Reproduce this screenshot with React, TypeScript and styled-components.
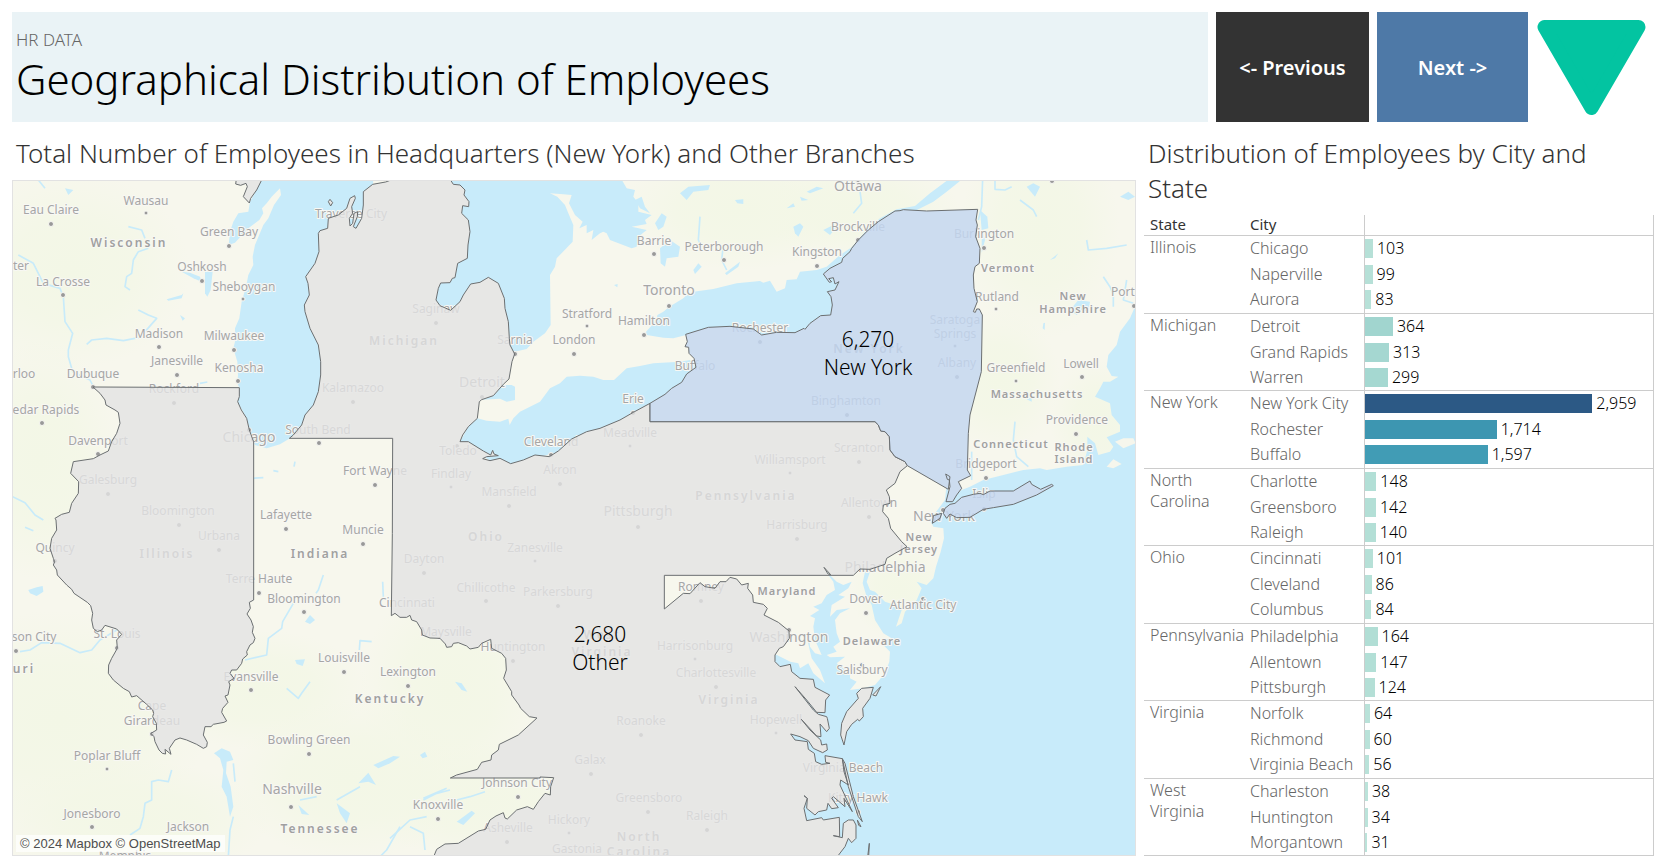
import React from "react";
import styled, { createGlobalStyle } from "styled-components";

const GlobalStyle = createGlobalStyle`
  *, *::before, *::after { box-sizing: border-box; }
  body {
    margin: 0;
    background: #ffffff;
    font-family: "Noto Sans", "Open Sans", sans-serif;
    font-weight: 300;
    color: #333333;
  }
`;

const Page = styled.div`
  min-height: 100vh;
  padding: 12px;
  display: flex;
  flex-direction: column;
  gap: 8px;
`;

const Header = styled.header`
  display: grid;
  grid-template-columns: 1fr 153px 151px 118px;
  gap: 8px;
  height: 110px;
`;

const TitlePanel = styled.div`
  background: #eaf3f6;
  padding: 16px 4px 0;
`;

const Kicker = styled.div`
  font-size: 17px;
  line-height: 24px;
  color: #666666;
`;

const Title = styled.h1`
  margin: 0;
  font-size: 42px;
  line-height: 54px;
  font-weight: 300;
  color: #000000;
`;

const NavButton = styled.button<{ $color: string }>`
  border: 0;
  padding: 0;
  background: ${(p) => p.$color};
  color: #ffffff;
  font-family: inherit;
  font-size: 20px;
  font-weight: 600;
  cursor: pointer;
`;

const Logo = styled.svg`
  display: block;
  width: 118px;
  height: 110px;
`;

const Main = styled.main`
  flex: 1;
  display: grid;
  grid-template-columns: minmax(0, 1fr) 510px;
  gap: 8px;
`;

const Panel = styled.section`
  display: flex;
  flex-direction: column;
  min-width: 0;
`;

const PanelTitle = styled.h2`
  margin: 0;
  padding: 6px 16px 9px 4px;
  font-size: 26px;
  line-height: 35px;
  font-weight: 300;
  color: #333333;
`;

const MapFrame = styled.div`
  position: relative;
  flex: 1;
  min-height: 400px;
  border: 1px solid #e2e2e2;
  overflow: hidden;
`;

const MapSvg = styled.svg`
  display: block;
  position: absolute;
  inset: 0;
  width: 100%;
  height: 100%;
`;

const Attribution = styled.div`
  position: absolute;
  left: 3px;
  bottom: 3px;
  padding: 0 4px;
  background: rgba(255, 255, 255, 0.7);
  font: 400 13px/17px "Liberation Sans", Arial, sans-serif;
  a { color: #4d4d4d; text-decoration: none; }
`;

const CityLabel = styled.text<{ $large?: boolean }>`
  font-size: ${(p) => (p.$large ? 14 : 12)}px;
  font-weight: 400;
  text-anchor: middle;
  fill: #a6a6a6;
  stroke: #f8f8f4;
  stroke-width: 2px;
  stroke-linejoin: round;
  paint-order: stroke;
`;

const StateLabel = styled.text<{ $small?: boolean }>`
  font-size: ${(p) => (p.$small ? 11 : 12)}px;
  letter-spacing: ${(p) => (p.$small ? 1 : 2)}px;
  font-weight: 600;
  text-anchor: middle;
  fill: #a0a0a0;
  stroke: #f8f8f4;
  stroke-width: 2px;
  stroke-linejoin: round;
  paint-order: stroke;
`;

const MarkLabel = styled.text`
  font-size: 21px;
  font-weight: 300;
  text-anchor: middle;
  fill: #000000;
`;

const Table = styled.table`
  width: 100%;
  table-layout: fixed;
  border-collapse: separate;
  border-spacing: 0;
  font-size: 16px;
  line-height: 21px;
  tbody:nth-of-type(even) tr:last-child { height: 25px; }
`;

const Row = styled.tr`
  height: 26px;
`;

const HeadRow = styled.tr`
  height: 21px;
`;

const HeadCell = styled.th`
  padding: 0 0 2px 6px;
  border-bottom: 1px solid #cccccc;
  text-align: left;
  font-size: 15px;
  line-height: 18px;
  font-weight: 400;
  color: #333333;
`;

const HeadChartCell = styled.td`
  border: 1px solid #cccccc;
  border-top: 0;
`;

const StateCell = styled.th`
  padding: 1px 2px 0 6px;
  border-bottom: 1px solid #cccccc;
  text-align: left;
  vertical-align: top;
  font-weight: 300;
  color: #666666;
`;

const CityCell = styled.td<{ $last: boolean }>`
  padding: 0 0 2px 6px;
  border-bottom: ${(p) => (p.$last ? "1px solid #cccccc" : "0")};
  white-space: nowrap;
  color: #666666;
`;

const ChartCell = styled.td<{ $last: boolean }>`
  padding: 0 0 2px;
  border-left: 1px solid #cccccc;
  border-right: 1px solid #cccccc;
  border-bottom: ${(p) => (p.$last ? "1px solid #cccccc" : "0")};
`;

const BarLine = styled.div`
  display: flex;
  align-items: center;
  gap: 4px;
  height: 21px;
  color: #000000;
`;

const Bar = styled.div<{ $color: string }>`
  flex: none;
  height: 19px;
  background: ${(p) => p.$color};
`;

type CityRow = [name: string, count: number, color: string];

const AXIS_MAX = 3750;

const groups: { state: string; cities: CityRow[] }[] = [
  { state: "Illinois", cities: [["Chicago", 103, "#b6e0d7"], ["Naperville", 99, "#b6e0d7"], ["Aurora", 83, "#b7e1d8"]] },
  { state: "Michigan", cities: [["Detroit", 364, "#a1d5cf"], ["Grand Rapids", 313, "#a5d7d1"], ["Warren", 299, "#a5d8d1"]] },
  { state: "New York", cities: [["New York City", 2959, "#2c5985"], ["Rochester", 1714, "#3d96b1"], ["Buffalo", 1597, "#419cb5"]] },
  { state: "North Carolina", cities: [["Charlotte", 148, "#b2dfd6"], ["Greensboro", 142, "#b3dfd6"], ["Raleigh", 140, "#b3dfd6"]] },
  { state: "Ohio", cities: [["Cincinnati", 101, "#b6e0d7"], ["Cleveland", 86, "#b7e1d8"], ["Columbus", 84, "#b7e1d8"]] },
  { state: "Pennsylvania", cities: [["Philadelphia", 164, "#b1ded5"], ["Allentown", 147, "#b2dfd6"], ["Pittsburgh", 124, "#b4dfd6"]] },
  { state: "Virginia", cities: [["Norfolk", 64, "#b9e2d9"], ["Richmond", 60, "#b9e2d9"], ["Virginia Beach", 56, "#b9e2d9"]] },
  { state: "West Virginia", cities: [["Charleston", 38, "#bbe3da"], ["Huntington", 34, "#bbe3da"], ["Morgantown", 31, "#bbe3da"]] },
];

/* Outlines are drawn on a grid three times finer than the map's own units. */
const illinois =
  "M279 1161 718 1163 718 1190 713 1205 724 1230 740 1255 748 1290 757 1315 761 1325 761 1800 748 1807 751 1825 741 1842 753 1860 760 1880 757 1897 765 1915 760 1928 750 1935 740 1955 742 1965 728 1977 725 1990 710 2010 695 2010 690 2020 702 2035 686 2045 690 2055 684 2085 675 2088 684 2107 668 2125 665 2137 680 2163 672 2167 640 2173 633 2180 615 2180 610 2205 622 2227 620 2240 610 2245 590 2233 560 2220 540 2214 525 2220 508 2245 513 2263 495 2248 497 2262 487 2260 477 2250 465 2225 462 2210 453 2200 470 2190 469 2170 458 2150 461 2140 458 2130 440 2113 410 2087 395 2091 388 2075 370 2065 340 2040 325 2020 326 1995 335 1975 352 1945 350 1920 365 1903 350 1887 315 1876 305 1890 292 1895 280 1885 275 1860 278 1840 272 1817 262 1807 222 1780 215 1768 200 1755 172 1725 170 1710 160 1695 164 1685 160 1675 150 1645 155 1615 170 1590 168 1560 165 1555 185 1543 208 1537 215 1510 235 1480 236 1445 212 1420 220 1385 280 1376 300 1365 325 1353 335 1325 350 1300 360 1270 355 1237 345 1230 318 1215 315 1200 300 1180Z";

const otherStates =
  "M1157 546 1118 553 1090 575 1090 615 1085 655 1068 685 1060 680 1072 650 1073 635 1062 640 1058 670 1050 678 1048 655 1058 640 1055 620 1066 595 1064 587 1050 595 1040 625 1015 645 985 655 983 685 960 692 955 700 957 755 945 790 917 830 924 850 928 885 913 915 915 935 930 985 955 1035 962 1085 962 1125 955 1175 940 1215 915 1245 905 1275 880 1305 868 1315 1178 1315 1177 1600 1174 1847 1185 1840 1200 1852 1220 1852 1230 1846 1235 1860 1250 1865 1265 1890 1267 1905 1290 1914 1320 1915 1336 1932 1340 1942 1355 1940 1360 1930 1375 1928 1400 1938 1410 1947 1435 1942 1445 1930 1472 1918 1475 1945 1505 1960 1517 1975 1519 2010 1511 2035 1535 2075 1535 2085 1557 2115 1562 2125 1588 2150 1611 2154 1555 2205 1498 2233 1495 2250 1475 2265 1473 2280 1445 2287 1432 2308 1370 2325 1351 2334 1620 2334 1620 2331 1661 2333 1652 2360 1651 2385 1635 2380 1615 2405 1600 2428 1582 2420 1550 2430 1522 2457 1515 2454 1510 2438 1488 2448 1470 2460 1457 2488 1435 2493 1375 2530 1335 2532 1310 2548 1297 2580 2510 2580 2515 2566 2535 2540 2545 2515 2555 2528 2568 2515 2568 2475 2560 2460 2545 2460 2530 2470 2527 2513 2500 2507 2519 2510 2518 2452 2470 2460 2465 2453 2420 2462 2412 2425 2422 2395 2412 2387 2422 2395 2420 2425 2445 2445 2455 2435 2480 2430 2484 2410 2495 2426 2515 2423 2495 2395 2500 2390 2535 2420 2532 2395 2557 2435 2520 2355 2522 2340 2545 2355 2532 2315 2527 2276 2475 2267 2477 2287 2490 2290 2465 2293 2447 2285 2443 2260 2425 2248 2422 2225 2385 2220 2372 2202 2400 2210 2425 2222 2440 2245 2468 2258 2482 2250 2480 2232 2465 2235 2462 2220 2430 2190 2404 2158 2450 2208 2463 2210 2460 2172 2480 2195 2488 2185 2482 2155 2480 2150 2455 2143 2440 2130 2385 2060 2420 2100 2450 2137 2475 2138 2477 2100 2489 2085 2445 2062 2440 2038 2400 2035 2375 2015 2371 1993 2340 2000 2325 1985 2325 1965 2338 1945 2350 1940 2368 1915 2367 1893 2335 1867 2292 1845 2302 1825 2290 1813 2260 1807 2258 1785 2243 1765 2245 1750 2225 1755 2210 1737 2190 1732 2178 1745 2160 1745 2145 1765 2115 1760 2100 1748 2070 1781 2050 1780 1993 1827 1993 1726 2560 1726 2580 1707 2610 1708 2655 1693 2660 1675 2685 1660 2721 1640 2705 1625 2672 1585 2665 1555 2648 1535 2650 1515 2670 1510 2668 1490 2659 1470 2685 1450 2700 1415 2722 1397 2715 1385 2685 1370 2670 1350 2668 1310 2655 1295 2642 1293 2635 1275 2625 1265 1950 1265 1950 1210 1900 1237 1860 1260 1800 1285 1760 1295 1715 1317 1675 1353 1648 1370 1605 1365 1570 1380 1532 1391 1500 1375 1470 1382 1448 1376 1460 1370 1495 1367 1482 1362 1478 1351 1472 1365 1450 1353 1405 1325 1380 1325 1388 1305 1405 1280 1432 1255 1438 1205 1445 1199 1480 1187 1510 1153 1527 1137 1536 1085 1544 1062 1530 1035 1528 1015 1525 965 1515 925 1513 895 1495 850 1465 832 1440 847 1412 852 1390 885 1380 905 1352 931 1320 917 1308 900 1315 865 1322 849 1350 848 1357 835 1365 833 1373 790 1402 775 1404 735 1410 695 1405 660 1385 640 1388 617 1406 620 1407 605 1392 585 1395 570 1380 555 1360 553 1345 530 1200 530Z " +
  "M710 530 707 552 722 556 738 550 742 560 730 590 748 609 752 595 770 570 790 530Z " +
  "M2585 2065 2620 2062 2610 2095 2588 2125 2590 2150 2578 2163 2573 2158 2555 2173 2540 2195 2532 2235 2522 2205 2525 2170 2540 2135 2575 2095 2570 2080Z M2642 2060 2618 2085 2628 2088Z " +
  "M2527 2276 2535 2290 2560 2390 2587 2465 2575 2450 2545 2360Z M2572 2460 2583 2480 2576 2476Z M2608 2530 2603 2570 2606 2570Z M985 605 990 598 998 608 992 618Z M2472 1702 2492 1724 2484 1722Z";

const newYork =
  "M1950 1265 2625 1265 2635 1275 2642 1293 2655 1295 2668 1310 2670 1350 2685 1370 2715 1385 2722 1397 2845 1468 2850 1430 2837 1422 2842 1438 2848 1440 2850 1460 2838 1505 2858 1505 2870 1485 2885 1465 2875 1445 2912 1427 2902 1410 2905 1300 2910 1245 2944 1115 2947 945 2938 927 2930 927 2926 937 2920 935 2932 905 2922 865 2920 825 2925 800 2938 790 2940 745 2927 710 2932 675 2928 660 2933 628 2780 633 2710 629 2700 632 2685 633 2635 665 2605 690 2575 720 2555 745 2550 755 2528 775 2525 787 2490 805 2470 822 2488 847 2495 845 2486 836 2500 833 2505 852 2517 845 2505 870 2482 875 2493 890 2497 915 2492 945 2462 947 2430 970 2415 988 2412 985 2385 998 2330 997 2285 1005 2260 987 2190 979 2125 982 2057 1003 2062 1025 2055 1040 2066 1042 2067 1060 2082 1075 2088 1102 2060 1122 2045 1147 2015 1165 1995 1183 1950 1210Z " +
  "M2830 1540 2835 1525 2850 1513 2865 1510 2885 1492 2920 1483 2940 1480 2950 1484 2970 1473 3040 1473 3090 1443 3095 1453 3122 1468 3155 1453 3160 1457 3110 1485 3040 1513 2980 1523 2950 1528 2910 1552 2870 1553 2850 1542 2840 1555Z M2797 1570 2800 1547 2825 1540 2820 1555Z";

const water = [
  "M790 530 750 605 745 635 715 640 700 665 690 695 686 735 705 728 720 712 745 685 778 660 790 640 786 625 800 610 815 590 840 565 843 585 822 615 805 655 790 675 765 735 758 770 760 795 745 825 738 860 725 905 718 955 705 985 705 1025 700 1045 712 1085 714 1125 712 1150 718 1163 713 1205 740 1255 757 1315 765 1335 800 1345 840 1333 870 1315 1000 1315 1100 1000 1120 530Z",
  "M1200 530 1860 530 1880 565 1905 570 1900 590 1915 610 1915 635 1955 645 1935 660 1940 672 1895 680 1940 690 1915 710 1910 740 1895 745 1830 720 1820 700 1810 695 1800 700 1775 720 1780 690 1760 700 1760 675 1738 685 1748 665 1725 645 1707 610 1715 585 1690 583 1650 580 1672 590 1695 615 1705 640 1720 675 1718 725 1670 775 1665 800 1650 825 1652 975 1635 1000 1600 1025 1580 1047 1544 1055 1300 1055Z",
  "M1480 1187 1510 1155 1535 1155 1545 1160 1545 1200 1520 1205 1500 1196 1445 1199Z",
  "M1380 1325 1405 1280 1432 1255 1460 1262 1500 1265 1525 1256 1529 1275 1540 1255 1560 1235 1620 1205 1650 1165 1680 1150 1700 1130 1740 1127 1780 1130 1810 1140 1842 1140 1880 1105 1920 1098 1960 1090 2040 1085 2070 1080 2088 1102 2100 1250 1500 1400Z",
  "M1940 1005 1938 995 1970 960 1972 945 1990 935 2008 920 2050 895 2060 885 2080 875 2140 867 2210 850 2280 843 2290 848 2310 842 2330 875 2355 865 2360 840 2390 838 2400 815 2450 810 2480 800 2520 765 2555 742 2600 690 2640 655 2690 628 2745 618 2790 580 2850 535 2890 535 2840 575 2800 605 2740 635 2500 1010 2060 1010 2058 1005 2020 1015 1990 1013Z",
  "M3420 900 3407 915 3390 955 3360 995 3350 1035 3325 1065 3320 1100 3335 1128 3355 1130 3330 1145 3310 1145 3300 1165 3285 1190 3330 1210 3335 1245 3360 1275 3360 1295 3320 1312 3340 1340 3330 1355 3295 1365 3285 1330 3262 1310 3262 1350 3250 1395 3200 1400 3140 1410 3120 1405 3070 1410 3010 1425 2950 1440 2910 1460 2885 1470 2850 1500 2840 1450 2835 1500 2790 1560 2800 1580 2830 1585 2832 1615 2822 1655 2808 1700 2800 1735 2780 1755 2750 1745 2765 1765 2750 1800 2715 1835 2705 1870 2688 1880 2705 1830 2685 1815 2655 1805 2625 1775 2610 1770 2600 1745 2610 1715 2595 1715 2588 1750 2600 1790 2615 1815 2625 1860 2650 1900 2675 1915 2650 1920 2645 1930 2670 1955 2668 1985 2655 2020 2625 2055 2590 2065 2550 2070 2570 2045 2550 2035 2550 2020 2510 1990 2535 1970 2490 1972 2480 1965 2510 1955 2500 1940 2520 1925 2510 1900 2505 1860 2520 1840 2550 1825 2510 1830 2490 1850 2495 1815 2535 1790 2515 1785 2545 1765 2555 1745 2530 1755 2510 1745 2480 1715 2470 1705 2500 1745 2505 1770 2480 1785 2465 1810 2440 1820 2458 1830 2430 1848 2445 1855 2440 1880 2445 1920 2465 1965 2445 1960 2430 1940 2425 1890 2422 1920 2435 1975 2460 2010 2475 2050 2440 2020 2425 1990 2400 2005 2385 1960 2395 1990 2371 1985 2320 1960 2300 2100 2300 2570 3420 2580Z",
];

const lakes = [
  "M615 815 638 815 632 870 622 890 615 880Z", "M545 815 570 818 600 830 605 845 580 835Z",
  "M500 898 545 885 550 880 545 895 505 902Z", "M195 565 220 570 205 585Z", "M540 945 555 955 548 962Z",
  "M85 1770 110 1762 128 1758 130 1775 110 1788 90 1780Z", "M915 1865 930 1845 945 1860 930 1872Z",
  "M885 1980 915 1978 908 1998 890 1992Z", "M642 2260 665 2245 690 2255 700 2280 680 2285 678 2320 692 2360 700 2420 690 2450 680 2390 665 2360 670 2310 660 2275Z",
  "M1075 2350 1105 2318 1128 2355 1105 2345Z", "M1010 2410 1050 2440 1040 2470 1020 2440Z",
  "M1120 2295 1180 2268 1200 2270 1170 2290 1135 2305Z", "M895 2415 928 2445 905 2442Z",
  "M1370 2465 1415 2432 1425 2440 1390 2475Z", "M1365 2045 1385 2050 1402 2075 1385 2070Z",
  "M1260 2265 1275 2255 1282 2270 1268 2275Z", "M1980 745 2010 720 2040 740 2035 770 2000 775 1995 800 1982 790Z",
  "M2080 810 2095 790 2105 800 2085 822Z", "M2175 820 2220 785 2215 800 2180 825Z", "M1842 855 1853 852 1852 862Z",
  "M2040 580 2065 560 2130 555 2125 570 2080 575 2060 600Z", "M2205 600 2230 598 2230 612 2212 610Z",
  "M1965 670 1985 640 2000 650 1990 680 1975 690Z", "M1905 600 1925 590 1935 620 1950 640 1920 625Z",
  "M2940 630 2962 650 2965 685 2945 690Z", "M2945 720 2950 700 2955 720 2945 760Z",
  "M3210 930 3235 900 3270 905 3265 935 3245 930 3230 945Z", "M3130 970 3135 968 3134 990 3128 985Z",
  "M3080 1198 3095 1190 3095 1205Z", "M3360 590 3385 575 3405 590 3385 600Z", "M3080 560 3100 550 3120 560 3105 590Z",
  "M2360 625 2380 610 2385 620Z", "M2420 575 2450 560 2470 565 2430 580Z", "M2380 680 2400 670 2410 680 2395 710 2385 700Z",
  "M2470 690 2500 675 2510 680 2490 705Z", "M2400 590 2425 600 2405 602Z", "M3150 780 3175 760 3165 775Z",
];

const rivers = [
  "M55 765 100 790 130 850 180 865 190 890 195 965 218 1000 205 1050 205 1070 218 1115 270 1140 280 1160",
  "M260 1033 275 1020 320 1015 370 1022 420 1012 470 955 445 945 415 930",
  "M445 745 415 755 400 780 395 820 380 830 375 860 390 870", "M385 680 425 690 435 715", "M115 540 135 565",
  "M60 1955 90 1950 125 1928 180 1930 240 1958 275 1950 300 1920 350 1890",
  "M38 1490 75 1508 105 1545 130 1560", "M75 1582 100 1592", "M515 2310 505 2345 475 2340 455 2345 455 2400 435 2410 430 2450 420 2485 390 2505",
  "M700 2290 705 2345", "M700 2450 690 2490 685 2570", "M970 1725 955 1770 948 1780", "M880 1810 848 1865 845 1885 805 1915 800 1965 735 1980",
  "M1078 1950 1080 1922 1115 1925", "M1148 1745 1150 1790", "M860 2065 895 2095 905 2080 930 2045", "M1200 2480 1160 2550 1140 2570",
  "M1270 2400 1310 2380 1350 2370 M1270 2395 1340 2365", "M1370 2400 1410 2390 1455 2375", "M1170 2515 1230 2460 1280 2450 M1230 2480 1270 2500 1275 2550",
  "M950 2390 900 2400 M1080 2360 1010 2400", "M2948 535 2945 620 2935 660", "M2985 540 2985 568 3015 570 3035 560",
  "M3260 720 3265 750 3320 745 3380 735", "M3310 830 3330 860 3340 885 3340 920", "M3380 840 3370 900 3400 910",
  "M3045 1265 3040 1320 3050 1370 3085 1400", "M2580 575 2585 610 2560 640", "M2100 650 2095 720 2105 740", "M2170 735 2165 780 2180 810",
  "M755 1435 790 1433 M820 1412 835 1415", "M885 1385 882 1400", "M3060 600 3100 630 3110 650",
  "M2915 1355 2915 1440", "M2540 1360 2510 1420 2430 1480 2395 1500", "M2330 1585 2420 1640 2470 1705", "M600 1150 622 1146",
];

type City = [x: number, y: number, name: string, size?: "L"];

const cities: City[] = [
  [51, 214, "Eau Claire"], [146, 205, "Wausau"], [229, 236, "Green Bay"], [21, 270, "ter"], [63, 286, "La Crosse"],
  [202, 271, "Oshkosh"], [244, 291, "Sheboygan"], [159, 338, "Madison"], [234, 340, "Milwaukee"], [177, 365, "Janesville"],
  [239, 372, "Kenosha"], [24, 378, "rloo"], [93, 378, "Dubuque"], [174, 393, "Rockford"], [353, 392, "Kalamazoo"],
  [46, 414, "edar Rapids"], [98, 445, "Davenport"], [249, 442, "Chicago", "L"], [318, 434, "South Bend"], [351, 218, "Traverse City"],
  [375, 475, "Fort Wayne"], [108, 484, "Galesburg"], [178, 515, "Bloomington"], [286, 519, "Lafayette"], [363, 534, "Muncie"],
  [219, 540, "Urbana"], [55, 552, "Quincy"], [259, 583, "Terre Haute"], [304, 603, "Bloomington"], [407, 607, "Cincinnati"],
  [34, 641, "son City"], [117, 638, "St. Louis"], [344, 662, "Louisville"], [251, 681, "Evansville"], [408, 676, "Lexington"],
  [152, 710, "Cape"], [152, 725, "Girardeau"], [309, 744, "Bowling Green"], [107, 760, "Poplar Bluff"], [292, 794, "Nashville", "L"],
  [92, 818, "Jonesboro"], [188, 831, "Jackson"], [125, 860, "Memphis"], [654, 245, "Barrie"], [724, 251, "Peterborough"],
  [669, 295, "Toronto", "L"], [587, 318, "Stratford"], [644, 325, "Hamilton"], [574, 344, "London"], [515, 344, "Sarnia"],
  [436, 313, "Saginaw"], [482, 387, "Detroit", "L"], [760, 332, "Rochester"], [695, 370, "Buffalo"], [633, 403, "Erie"],
  [630, 437, "Meadville"], [551, 446, "Cleveland"], [458, 455, "Toledo"], [560, 474, "Akron"], [451, 478, "Findlay"],
  [509, 496, "Mansfield"], [638, 516, "Pittsburgh", "L"], [790, 464, "Williamsport"], [797, 529, "Harrisburg"], [535, 552, "Zanesville"],
  [424, 563, "Dayton"], [486, 592, "Chillicothe"], [558, 596, "Parkersburg"], [446, 636, "Maysville"], [513, 651, "Huntington"],
  [517, 787, "Johnson City"], [438, 809, "Knoxville"], [508, 832, "Asheville"], [569, 824, "Hickory"], [577, 853, "Gastonia"],
  [649, 802, "Greensboro"], [590, 764, "Galax"], [641, 725, "Roanoke"], [707, 820, "Raleigh"], [695, 650, "Harrisonburg"],
  [716, 677, "Charlottesville"], [701, 591, "Romney"], [789, 642, "Washington", "L"], [776, 724, "Hopewell"], [858, 191, "Ottawa", "L"],
  [858, 231, "Brockville"], [817, 256, "Kingston"], [984, 238, "Burlington"], [997, 301, "Rutland"], [1123, 296, "Port"],
  [955, 324, "Saratoga"], [955, 338, "Springs"], [957, 367, "Albany"], [1016, 372, "Greenfield"], [1081, 368, "Lowell"],
  [846, 405, "Binghamton"], [859, 452, "Scranton"], [1077, 424, "Providence"], [986, 468, "Bridgeport"], [984, 498, "Islip"],
  [869, 507, "Allentown"], [944, 521, "New York", "L"], [885, 572, "Philadelphia", "L"], [866, 603, "Dover"], [923, 609, "Atlantic City"],
  [862, 674, "Salisbury"], [843, 772, "Virginia Beach"], [858, 802, "Kitty Hawk"],
];

const stateNames: [x: number, y: number, name: string, size?: "S"][] = [
  [129, 247, "Wisconsin"], [404, 345, "Michigan"], [167, 558, "Illinois"], [320, 558, "Indiana"], [24, 673, "uri"],
  [390, 703, "Kentucky"], [320, 833, "Tennessee"], [486, 541, "Ohio"], [746, 500, "Pennsylvania"], [602, 639, "West"],
  [602, 656, "Virginia"], [729, 704, "Virginia"], [639, 841, "North"], [639, 856, "Carolina"], [869, 353, "New York"],
  [787, 595, "Maryland", "S"], [1008, 272, "Vermont", "S"], [1073, 300, "New", "S"], [1073, 313, "Hampshire", "S"],
  [1037, 398, "Massachusetts", "S"], [1011, 448, "Connecticut", "S"], [1074, 451, "Rhode", "S"], [1074, 463, "Island", "S"],
  [919, 541, "New", "S"], [919, 553, "Jersey", "S"], [872, 645, "Delaware", "S"],
];

const dots: [x: number, y: number][] = [
  [51, 224], [229, 246], [63, 295], [202, 281], [159, 347], [234, 350], [177, 375], [238, 381], [93, 387], [174, 403],
  [353, 402], [42, 423], [98, 454], [249, 430], [319, 443], [375, 485], [108, 494], [179, 525], [286, 529], [363, 544],
  [219, 550], [55, 561], [259, 593], [304, 612], [16, 651], [117, 648], [344, 672], [251, 690], [408, 686], [152, 734],
  [309, 754], [291, 807], [92, 827], [654, 254], [724, 260], [669, 306], [644, 335], [574, 354], [515, 354], [436, 323],
  [482, 397], [760, 342], [633, 413], [551, 455], [457, 446], [560, 484], [509, 506], [638, 527], [797, 539], [424, 573],
  [486, 601], [558, 606], [513, 661], [518, 797], [438, 819], [507, 842], [648, 812], [591, 774], [641, 735], [707, 830],
  [716, 687], [701, 601], [789, 630], [858, 240], [817, 266], [984, 248], [1134, 306], [957, 377], [1082, 377], [847, 415],
  [859, 462], [1076, 434], [986, 478], [984, 509], [869, 517], [943, 510], [866, 613], [923, 599], [862, 665], [858, 812],
  [1052, 181], [858, 180],
];

const smallDots: [x: number, y: number][] = [
  [146, 213], [243, 299], [107, 769], [587, 326], [630, 446], [451, 487], [790, 473], [535, 561], [569, 833], [695, 659],
  [776, 733], [996, 309], [955, 346], [1016, 381],
];

const terrain: [cx: number, cy: number, rx: number, ry: number][] = [
  [70, 270, 120, 100], [40, 460, 80, 120], [60, 720, 150, 110], [130, 820, 140, 60], [260, 690, 110, 60], [450, 690, 90, 110],
  [480, 800, 120, 60], [350, 780, 120, 80], [740, 210, 120, 60], [860, 210, 100, 50], [1040, 230, 80, 110], [1000, 380, 60, 70],
  [900, 590, 50, 50], [1100, 420, 50, 60],
];

const EmployeeMap = () => (
  <MapSvg viewBox="13 181 1122 674" preserveAspectRatio="xMidYMid slice" role="img" aria-label="Map of employees by branch">
    <defs>
      <radialGradient id="green">
        <stop offset="0" stopColor="#f3f7e6" />
        <stop offset="0.5" stopColor="#f3f7e6" stopOpacity="0.8" />
        <stop offset="1" stopColor="#f3f7e6" stopOpacity="0" />
      </radialGradient>
    </defs>
    <rect x="-600" y="-400" width="2400" height="1900" fill="#f7f7ed" />
    {terrain.map(([cx, cy, rx, ry]) => (
      <ellipse key={`${cx}-${cy}`} cx={cx} cy={cy} rx={rx} ry={ry} fill="url(#green)" />
    ))}
    <g transform="scale(0.3333333)">
      <g fill="#c8ebfa">
        {water.map((d) => <path key={d} d={d} />)}
        {lakes.map((d) => <path key={d} d={d} />)}
      </g>
      <g fill="none" stroke="#c8ebfa" strokeWidth="5" strokeLinejoin="round">
        {rivers.map((d) => <path key={d} d={d} />)}
      </g>
      <path fill="#f6f6ec" d="M3345 1325 3370 1315 3400 1315 3407 1330 3370 1345Z M3320 1400 3340 1378 3365 1392 3340 1405Z" />
      <path fill="#f6f6ec" d={illinois + otherStates + newYork} />
    </g>
    <g fill="#999999" stroke="#f8f8f4" strokeWidth="1">
      {dots.map(([x, y]) => <circle key={`${x}-${y}`} cx={x} cy={y} r="2.5" />)}
      {smallDots.map(([x, y]) => <circle key={`${x}-${y}`} cx={x} cy={y} r="2" />)}
    </g>
    {cities.map(([x, y, name, size]) => (
      <CityLabel key={`${name}-${x}`} x={x} y={y} $large={size === "L"}>{name}</CityLabel>
    ))}
    {stateNames.map(([x, y, name, size]) => (
      <StateLabel key={`${name}-${x}`} x={x} y={y} $small={size === "S"}>{name}</StateLabel>
    ))}
    <g transform="scale(0.3333333)" stroke="#6a6e70" strokeWidth="3" strokeLinejoin="round">
      <path d={illinois} fill="#e4e4e4" fillOpacity="0.8" />
      <path d={otherStates} fill="#e4e4e4" fillOpacity="0.8" />
      <path d={newYork} fill="#c4d6ef" fillOpacity="0.84" />
    </g>
    <MarkLabel x="868" y="347">6,270</MarkLabel>
    <MarkLabel x="868" y="375">New York</MarkLabel>
    <MarkLabel x="600" y="642">2,680</MarkLabel>
    <MarkLabel x="600" y="670">Other</MarkLabel>
  </MapSvg>
);

const EmployeeTable = () => (
  <Table>
    <colgroup>
      <col style={{ width: 100 }} />
      <col style={{ width: 120 }} />
      <col />
    </colgroup>
    <thead>
      <HeadRow>
        <HeadCell scope="col">State</HeadCell>
        <HeadCell scope="col">City</HeadCell>
        <HeadChartCell />
      </HeadRow>
    </thead>
    {groups.map((group) => (
      <tbody key={group.state}>
        {group.cities.map(([name, count, color], i) => {
          const last = i === group.cities.length - 1;
          return (
            <Row key={name}>
              {i === 0 && <StateCell rowSpan={3} scope="rowgroup">{group.state}</StateCell>}
              <CityCell $last={last}>{name}</CityCell>
              <ChartCell $last={last}>
                <BarLine>
                  <Bar $color={color} style={{ width: `${(count / AXIS_MAX) * 100}%` }} />
                  {count.toLocaleString("en-US")}
                </BarLine>
              </ChartCell>
            </Row>
          );
        })}
      </tbody>
    ))}
  </Table>
);

export default function App() {
  return (
    <>
      <GlobalStyle />
      <Page>
        <Header>
          <TitlePanel>
            <Kicker>HR DATA</Kicker>
            <Title>Geographical Distribution of Employees</Title>
          </TitlePanel>
          <NavButton type="button" $color="#333333">&lt;- Previous</NavButton>
          <NavButton type="button" $color="#4e79a7">Next -&gt;</NavButton>
          <Logo viewBox="0 0 118 110" aria-hidden="true">
            <path d="M8.500 15H102.500L55.500 96Z" fill="#03c4a1" stroke="#03c4a1" strokeWidth="14" strokeLinejoin="round" />
          </Logo>
        </Header>
        <Main>
          <Panel>
            <PanelTitle>Total Number of Employees in Headquarters (New York) and Other Branches</PanelTitle>
            <MapFrame>
              <EmployeeMap />
              <Attribution>
                <a href="#mapbox">© 2024 Mapbox</a> <a href="#openstreetmap">© OpenStreetMap</a>
              </Attribution>
            </MapFrame>
          </Panel>
          <Panel>
            <PanelTitle>Distribution of Employees by City and State</PanelTitle>
            <EmployeeTable />
          </Panel>
        </Main>
      </Page>
    </>
  );
}
